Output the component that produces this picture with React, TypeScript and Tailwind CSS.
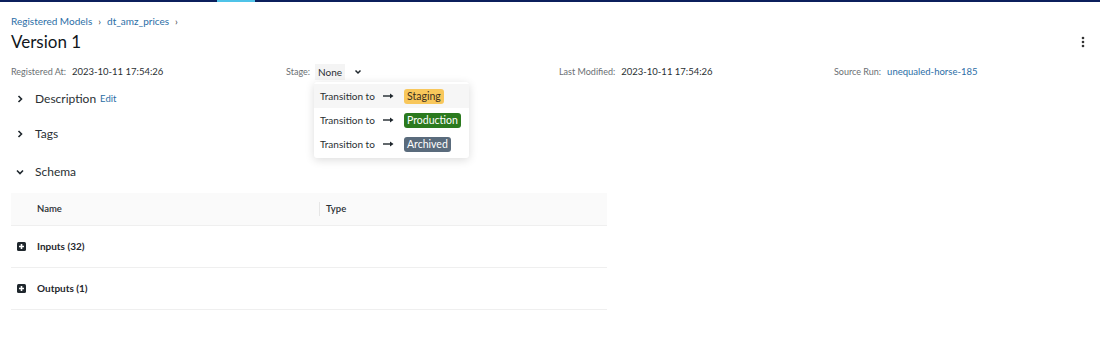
import React from "react";

const font = { fontFamily: 'Lato, "Noto Sans", Arial, sans-serif' };

function Chevron({ down = false }: { down?: boolean }) {
  return (
    <svg width="10" height="10" viewBox="0 0 10 10" className="shrink-0">
      {down ? (
        <path d="M2 3.5 L5 6.5 L8 3.5" fill="none" stroke="#1f272d" strokeWidth="1.6" />
      ) : (
        <path d="M3.5 2 L6.5 5 L3.5 8" fill="none" stroke="#1f272d" strokeWidth="1.6" />
      )}
    </svg>
  );
}

function PlusSquare() {
  return (
    <svg width="9" height="9" viewBox="0 0 9 9" className="shrink-0">
      <rect x="0" y="0" width="9" height="9" rx="1.5" fill="#1f272d" />
      <path d="M4.5 2 V7 M2 4.5 H7" stroke="#fff" strokeWidth="1.6" />
    </svg>
  );
}

function Arrow() {
  return (
    <svg width="11" height="6" viewBox="0 0 11 6" className="shrink-0">
      <path d="M0 3 H8" stroke="#1f272d" strokeWidth="1.4" />
      <path d="M7 0.5 L10.5 3 L7 5.5 Z" fill="#1f272d" />
    </svg>
  );
}

function Item({ label, cls }: { label: string; cls: string }) {
  return (
    <div className="flex items-center h-6 pl-[6px] text-[10px] text-[#2a2f33] whitespace-nowrap">
      <span className="w-[63px]">Transition to</span>
      <Arrow />
      <span className={`ml-[10px] px-[3px] h-[15px] leading-[15px] rounded-[3px] text-[10.5px] ${cls}`}>{label}</span>
    </div>
  );
}

export default function App() {
  return (
    <div className="w-[1100px] h-[356px] bg-white relative overflow-hidden whitespace-nowrap" style={font}>
      <div className="flex h-[2px] bg-[#0b1f5c]">
        <div className="w-[217px]" />
        <div className="w-[38px] bg-[#4fc3e8]" />
      </div>
      <div className="pl-[11px] pr-[13px]">
        <div className="flex items-center gap-[6px] mt-[12px] h-[14px] text-[10px] text-[#2b6ea6]">
          <span>Registered Models</span>
          <span className="text-[#444] text-[10px]">›</span>
          <span>dt_amz_prices</span>
          <span className="text-[#444] text-[10px]">›</span>
        </div>
        <div className="flex items-center justify-between mt-[2px] h-[24px]">
          <span className="text-[17px] text-[#11171c]">Version 1</span>
          <svg width="4" height="12" viewBox="0 0 4 12" className="mr-[2px]">
            <circle cx="2" cy="2" r="1.3" fill="#333" />
            <circle cx="2" cy="6" r="1.3" fill="#333" />
            <circle cx="2" cy="10" r="1.3" fill="#333" />
          </svg>
        </div>
        <div className="grid grid-cols-[275px_273px_275px_1fr] mt-[10px] h-[14px] items-center text-[9px]">
          <div className="flex items-center">
            <span className="text-[#6b6f73]">Registered At:</span>
            <span className="ml-[6px] text-[#2a2f33] text-[9.5px]">2023-10-11 17:54:26</span>
          </div>
          <div className="flex items-center">
            <span className="text-[#6b6f73]">Stage:</span>
            <div className="relative ml-[5px]">
              <span className="inline-block px-[3px] h-[16px] leading-[16px] bg-[#f4f4f4] text-[#2a2f33] text-[10px]">None</span>
              <div className="absolute left-[-1px] top-[18px] w-[155px] bg-white rounded-[3px] shadow-[0_2px_10px_rgba(0,0,0,0.14)] py-[2px] z-10">
                <div className="bg-[#f6f6f6]">
                  <Item label="Staging" cls="bg-[#f8c75b] text-[#3c3020]" />
                </div>
                <Item label="Production" cls="bg-[#2b7a1e] text-white" />
                <Item label="Archived" cls="bg-[#5a6b7c] text-white" />
              </div>
            </div>
            <span className="ml-[9px]"><svg width="8" height="8" viewBox="0 0 8 8"><path d="M1.5 2.5 L4 5 L6.5 2.5" fill="none" stroke="#1f272d" strokeWidth="1.5" /></svg></span>
          </div>
          <div className="flex items-center">
            <span className="text-[#6b6f73]">Last Modified:</span>
            <span className="ml-[6px] text-[#2a2f33] text-[9.5px]">2023-10-11 17:54:26</span>
          </div>
          <div className="flex items-center">
            <span className="text-[#6b6f73]">Source Run:</span>
            <span className="ml-[6px] text-[#2b6ea6] text-[9.5px]">unequaled-horse-185</span>
          </div>
        </div>
        <div className="flex items-center mt-[11px] h-[20px] pl-[4px]">
          <Chevron />
          <span className="ml-[10px] text-[12px] text-[#2a2f33]">Description</span>
          <span className="ml-[4px] text-[9.5px] text-[#2b6ea6]">Edit</span>
        </div>
        <div className="flex items-center mt-[15px] h-[20px] pl-[4px]">
          <Chevron />
          <span className="ml-[10px] text-[12px] text-[#2a2f33]">Tags</span>
        </div>
        <div className="flex items-center mt-[18px] h-[20px] pl-[4px]">
          <Chevron down />
          <span className="ml-[10px] text-[12px] text-[#2a2f33]">Schema</span>
        </div>
        <div className="w-[596px] mt-[11px]">
          <div className="flex items-center h-[33px] bg-[#fafafa] border-b border-[#efefef] text-[9.5px] font-semibold text-[#2a2f33]">
            <div className="w-[309px] pl-[26px] flex items-center justify-between">
              <span>Name</span>
              <span className="w-px h-[14px] bg-[#e6e6e6]" />
            </div>
            <span className="pl-[6px]">Type</span>
          </div>
          <div className="flex items-center h-[42px] border-b border-[#efefef] pl-[6px] text-[10px] font-bold text-[#1f272d]">
            <PlusSquare />
            <span className="ml-[11px]">Inputs (32)</span>
          </div>
          <div className="flex items-center h-[42px] border-b border-[#efefef] pl-[6px] text-[10px] font-bold text-[#1f272d]">
            <PlusSquare />
            <span className="ml-[11px]">Outputs (1)</span>
          </div>
        </div>
      </div>
    </div>
  );
}
